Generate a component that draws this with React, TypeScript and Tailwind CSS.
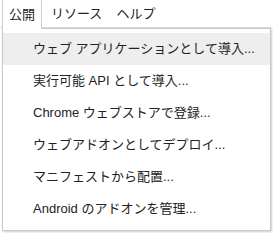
import React from "react";

const items = [
  "ウェブ アプリケーションとして導入...",
  "実行可能 API として導入...",
  "Chrome ウェブストアで登録...",
  "ウェブアドオンとしてデプロイ...",
  "マニフェストから配置...",
  "Android のアドオンを管理...",
];

export default function App() {
  return (
    <div
      className="relative w-[273px] h-[233px] overflow-hidden bg-white text-[13px] text-[#222]"
      style={{ fontFamily: '"Liberation Sans", "Noto Sans CJK JP", sans-serif' }}
    >
      <div className="flex h-[28px] border-b border-[#e0e0e0]">
        <div className="relative z-10 ml-[2px] flex h-[29px] items-center border-x border-[#ccc] bg-white px-[6px]">
          公開
        </div>
        <div className="ml-[9px] flex items-center">リソース</div>
        <div className="ml-[14px] flex items-center">ヘルプ</div>
      </div>
      <div className="ml-[2px] w-[269px] h-[203px] border border-[#c8c8c8] bg-white pt-[4px] shadow-[1px_1px_2px_rgba(0,0,0,0.2)]">
        {items.map((t, i) => (
          <div
            key={i}
            className={`flex h-[32px] items-center pl-[30px] whitespace-nowrap ${
              i === 0 ? "bg-[#eeeeee]" : ""
            }`}
          >
            {t}
          </div>
        ))}
      </div>
    </div>
  );
}
